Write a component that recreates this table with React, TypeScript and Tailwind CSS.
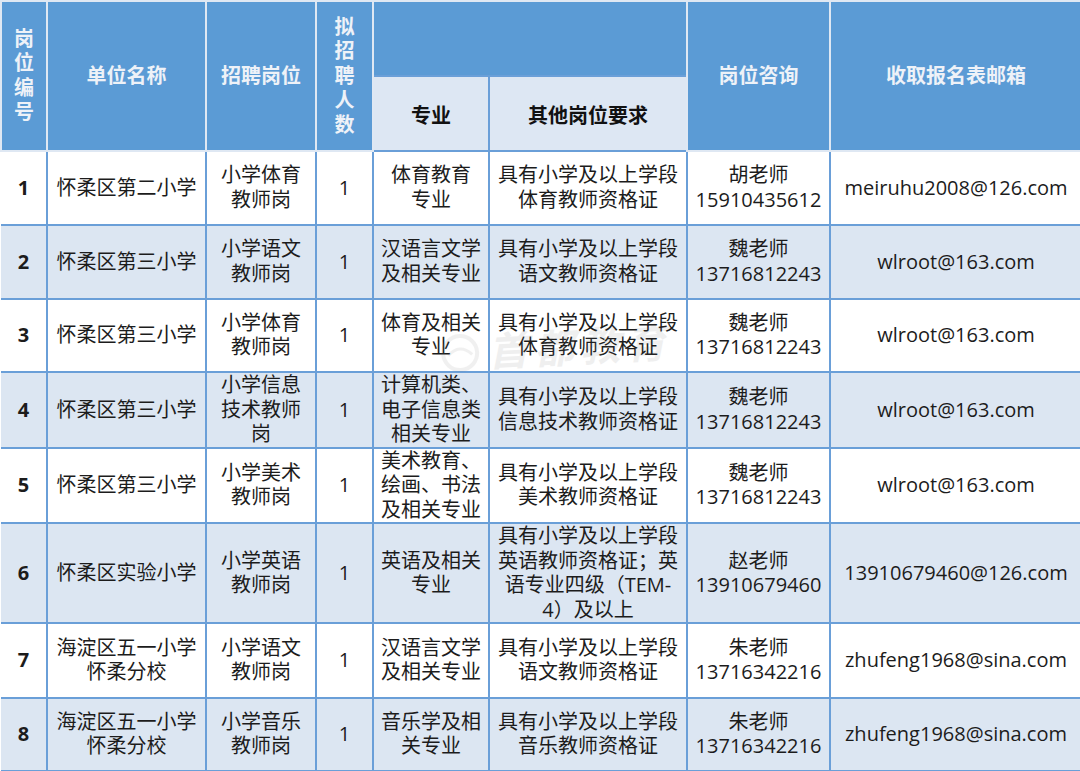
import React from 'react';

type Row = {
  no: string;
  unit: string[];
  post: string[];
  count: string;
  major: string[];
  req: string[];
  contact: string[];
  email: string;
  h: string;
};

const rows: Row[] = [
  { no: '1', unit: ['怀柔区第二小学'], post: ['小学体育', '教师岗'], count: '1', major: ['体育教育', '专业'], req: ['具有小学及以上学段', '体育教师资格证'], contact: ['胡老师', '15910435612'], email: 'meiruhu2008@126.com', h: 'h-[74.5px]' },
  { no: '2', unit: ['怀柔区第三小学'], post: ['小学语文', '教师岗'], count: '1', major: ['汉语言文学', '及相关专业'], req: ['具有小学及以上学段', '语文教师资格证'], contact: ['魏老师', '13716812243'], email: 'wlroot@163.com', h: 'h-[73.5px]' },
  { no: '3', unit: ['怀柔区第三小学'], post: ['小学体育', '教师岗'], count: '1', major: ['体育及相关', '专业'], req: ['具有小学及以上学段', '体育教师资格证'], contact: ['魏老师', '13716812243'], email: 'wlroot@163.com', h: 'h-[73.5px]' },
  { no: '4', unit: ['怀柔区第三小学'], post: ['小学信息', '技术教师', '岗'], count: '1', major: ['计算机类、', '电子信息类', '相关专业'], req: ['具有小学及以上学段', '信息技术教师资格证'], contact: ['魏老师', '13716812243'], email: 'wlroot@163.com', h: 'h-[74.5px]' },
  { no: '5', unit: ['怀柔区第三小学'], post: ['小学美术', '教师岗'], count: '1', major: ['美术教育、', '绘画、书法', '及相关专业'], req: ['具有小学及以上学段', '美术教师资格证'], contact: ['魏老师', '13716812243'], email: 'wlroot@163.com', h: 'h-[73.5px]' },
  { no: '6', unit: ['怀柔区实验小学'], post: ['小学英语', '教师岗'], count: '1', major: ['英语及相关', '专业'], req: ['具有小学及以上学段', '英语教师资格证；英', '语专业四级（TEM-', '4）及以上'], contact: ['赵老师', '13910679460'], email: '13910679460@126.com', h: 'h-[99.5px]' },
  { no: '7', unit: ['海淀区五一小学', '怀柔分校'], post: ['小学语文', '教师岗'], count: '1', major: ['汉语言文学', '及相关专业'], req: ['具有小学及以上学段', '语文教师资格证'], contact: ['朱老师', '13716342216'], email: 'zhufeng1968@sina.com', h: 'h-[74.5px]' },
  { no: '8', unit: ['海淀区五一小学', '怀柔分校'], post: ['小学音乐', '教师岗'], count: '1', major: ['音乐学及相', '关专业'], req: ['具有小学及以上学段', '音乐教师资格证'], contact: ['朱老师', '13716342216'], email: 'zhufeng1968@sina.com', h: 'h-[73.5px]' },
];

const Lines = ({ items }: { items: string[] }) => (
  <>
    {items.map((t, i) => (
      <div key={i} className="whitespace-nowrap">{t}</div>
    ))}
  </>
);

const td = 'border-2 border-[#6a9fd8] text-center align-middle p-0';
const th = 'border-2 border-[#dfe8f3] bg-[#5b9bd5] text-[#eef2f8] font-bold text-center align-middle p-0';

export default function App() {
  return (
    <div
      className="relative w-[1080px] h-[771px] overflow-hidden bg-white text-[#1c1c1c] text-[20px] leading-[24.5px]"
      style={{ fontFamily: '"Open Sans", "Noto Sans CJK SC", sans-serif' }}
    >
      <table className="w-[1080px] table-fixed border-collapse">
        <colgroup>
          <col className="w-[46px]" />
          <col className="w-[159px]" />
          <col className="w-[110px]" />
          <col className="w-[57px]" />
          <col className="w-[116px]" />
          <col className="w-[198px]" />
          <col className="w-[143px]" />
          <col className="w-[251px]" />
        </colgroup>
        <thead>
          <tr className="h-[75px]">
            <th rowSpan={2} className={th}>
              <Lines items={['岗', '位', '编', '号']} />
            </th>
            <th rowSpan={2} className={th}>单位名称</th>
            <th rowSpan={2} className={th}>招聘岗位</th>
            <th rowSpan={2} className={th}>
              <Lines items={['拟', '招', '聘', '人', '数']} />
            </th>
            <th colSpan={2} className={`${th} border-b-0`}></th>
            <th rowSpan={2} className={th}>岗位咨询</th>
            <th rowSpan={2} className={`${th} border-r-0`}>收取报名表邮箱</th>
          </tr>
          <tr className="h-[74.5px]">
            <th className="border-2 border-[#6a9fd8] bg-[#dde7f3] text-[#111] font-bold text-center align-middle pt-[6px]">专业</th>
            <th className="border-2 border-[#6a9fd8] bg-[#dde7f3] text-[#111] font-bold text-center align-middle pt-[6px]">其他岗位要求</th>
          </tr>
        </thead>
        <tbody>
          {rows.map((r, i) => (
            <tr key={r.no} className={`${r.h} ${i % 2 === 1 ? 'bg-[#dce6f2]' : 'bg-white'}`}>
              <td className={`${td} border-l-0 font-bold`}>{r.no}</td>
              <td className={td}><Lines items={r.unit} /></td>
              <td className={td}><Lines items={r.post} /></td>
              <td className={td}>{r.count}</td>
              <td className={td}><Lines items={r.major} /></td>
              <td className={td}><Lines items={r.req} /></td>
              <td className={td}><Lines items={r.contact} /></td>
              <td className={`${td} border-r-0`}>{r.email}</td>
            </tr>
          ))}
        </tbody>
      </table>

      {/* faint watermark */}
      <div className="pointer-events-none absolute left-[440px] top-[328px] flex items-center gap-2 opacity-[0.1] -rotate-3">
        <svg width="40" height="40" viewBox="0 0 40 40">
          <circle cx="20" cy="20" r="17" fill="none" stroke="#7a7a7a" strokeWidth="4" />
          <path d="M8 22 Q20 10 32 22" fill="none" stroke="#7a7a7a" strokeWidth="3" />
        </svg>
        <span className="text-[40px] font-bold italic text-[#6b6b6b] tracking-[6px]">首都教育</span>
      </div>
    </div>
  );
}
